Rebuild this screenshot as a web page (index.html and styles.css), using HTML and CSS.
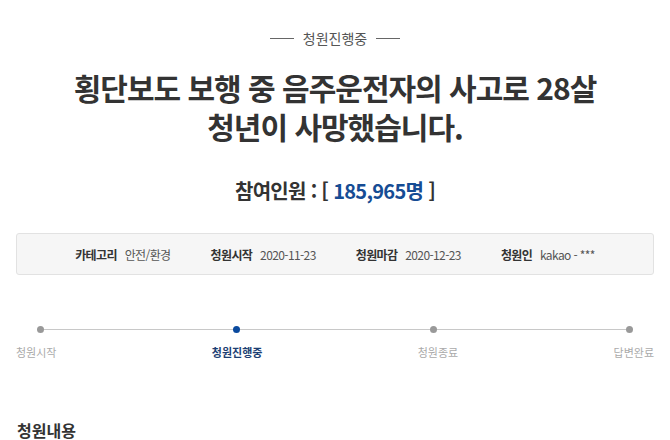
FILE: index.html
```html
<!DOCTYPE html>
<html lang="ko">
<head>
<meta charset="UTF-8">
<title>청원진행중</title>
<link rel="stylesheet" href="styles.css">
</head>
<body>
  <div class="page">
    <div class="status"><span class="dash"></span>청원진행중<span class="dash"></span></div>

    <h1 class="title">횡단보도 보행 중 음주운전자의 사고로 28살<br>청년이 사망했습니다.</h1>

    <h2 class="count">참여인원 : [ <span class="num">185,965명</span> ]</h2>

    <ul class="info">
      <li><strong>카테고리</strong> 안전/환경</li>
      <li><strong>청원시작</strong> 2020-11-23</li>
      <li><strong>청원마감</strong> 2020-12-23</li>
      <li><strong>청원인</strong> kakao - ***</li>
    </ul>

    <div class="progress">
      <div class="track">
        <span class="dot"></span>
        <span class="dot on"></span>
        <span class="dot"></span>
        <span class="dot"></span>
      </div>
      <div class="steps">
        <span>청원시작</span>
        <span class="on">청원진행중</span>
        <span>청원종료</span>
        <span>답변완료</span>
      </div>
    </div>

    <h3 class="content-title">청원내용</h3>
  </div>
</body>
</html>
```

FILE: styles.css
```css
body {
  margin: 0;
  font-family: "Noto Sans CJK KR", "Noto Sans", sans-serif;
  color: #333;
  background: #fff;
}
.page {
  padding: 0 16px;
}
.status {
  display: flex;
  justify-content: center;
  align-items: center;
  gap: 9px;
  padding-top: 28px;
  font-size: 14px;
  line-height: 20px;
  color: #555;
}
.dash {
  width: 24px;
  height: 1px;
  background: #666;
}
.title {
  margin: 20px 0 0;
  text-align: center;
  font-size: 30px;
  line-height: 39px;
  letter-spacing: -1px;
  font-weight: 700;
  color: #333;
}
.count {
  margin: 31px 0 0;
  text-align: center;
  font-size: 20px;
  line-height: 28px;
  letter-spacing: -0.7px;
  font-weight: 700;
  color: #333;
}
.count .num {
  color: #164c94;
}
.info {
  list-style: none;
  margin: 28px 0 0;
  padding: 0;
  height: 40px;
  display: flex;
  justify-content: center;
  align-items: center;
  gap: 40px;
  background: #f6f6f6;
  border: 1px solid #e2e2e2;
  border-radius: 3px;
  font-size: 12px;
  letter-spacing: -0.6px;
  color: #555;
}
.info strong {
  color: #333;
  margin-right: 5px;
}
.progress {
  margin-top: 51px;
}
.track {
  margin: 0 21px;
  height: 7px;
  display: flex;
  justify-content: space-between;
  align-items: center;
  background: linear-gradient(#c8c8c8, #c8c8c8) center / 100% 1px no-repeat;
}
.dot {
  width: 7px;
  height: 7px;
  border-radius: 50%;
  background: #999;
}
.dot.on {
  background: #0a4a9e;
}
.steps {
  margin-top: 11px;
  display: flex;
  justify-content: space-between;
  font-size: 11px;
  line-height: 16px;
  color: #aaa;
}
.steps .on {
  font-weight: 700;
  color: #1d3f73;
}
.content-title {
  margin: 59px 0 0 1px;
  font-size: 16px;
  line-height: 22px;
  font-weight: 700;
  color: #333;
}
```
